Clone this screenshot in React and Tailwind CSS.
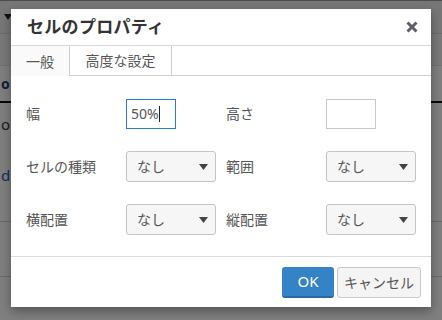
import React from 'react'

const font = { fontFamily: '"Noto Sans", "Noto Sans CJK JP", sans-serif' }

const Select = () => (
  <div className="flex items-center justify-between w-[90px] h-[31px] pl-[10px] pr-[7px] bg-[#f5f6f5] border border-[#c4c4c4] rounded-[3px] text-[14px] text-[#555]">
    <span>なし</span>
    <svg width="9" height="6" viewBox="0 0 9 6">
      <path d="M0 0 L9 0 L4.5 6 Z" fill="#444" />
    </svg>
  </div>
)

const Label = ({ children }) => (
  <div className="flex items-center text-[14px] text-[#555]">{children}</div>
)

const Backdrop = () => (
  <div className="absolute inset-0 flex flex-col bg-white">
    <div className="h-[33px] border-t border-[#999] bg-[#eeeeee] flex items-center pl-[4px]">
      <svg width="8" height="6" viewBox="0 0 8 6">
        <path d="M0 0 L8 0 L4 6 Z" fill="#222" />
      </svg>
    </div>
    <div className="h-[32px] border-t border-[#d8d8d8] bg-[#f2f2f2]" />
    <div className="h-[36px] border-t border-[#e4e4e4] flex items-center">
      <span className="ml-[1px] text-[14px] leading-none font-bold text-[#1c3f6e]">o</span>
    </div>
    <div className="h-[120px] border-t-2 border-[#111] flex flex-col">
      <span className="mt-[14px] ml-[1px] text-[15px] leading-none text-[#333]">o</span>
      <span className="mt-[36px] ml-[1px] text-[15px] leading-none text-[#1a5fa6]">di</span>
    </div>
    <div className="h-[55px] border-t border-[#d4d4d4]" />
    <div className="flex-1 border-t border-[#d4d4d4]" />
  </div>
)

export default function App() {
  return (
    <div className="relative w-[442px] h-[320px] overflow-hidden" style={font}>
      <Backdrop />
      <div className="absolute inset-0 bg-black/50" />

      {/* Dialog */}
      <div className="absolute left-[11px] top-[9px] w-[420px] h-[298px] bg-white flex flex-col shadow-[0_4px_10px_rgba(0,0,0,0.35)]">
        <div className="h-[37px] border-b border-[#d6d6d6] flex items-center justify-between pl-[16px] pr-[13px]">
          <h1 className="text-[17px] font-bold text-[#333] tracking-[0.3px]">セルのプロパティ</h1>
          <svg width="12" height="12" viewBox="0 0 12 12">
            <path d="M1.5 1.5 L10.5 10.5 M10.5 1.5 L1.5 10.5" stroke="#5c6066" strokeWidth="3" />
          </svg>
        </div>

        <div className="flex h-[30px]">
          <div className="w-[59px] bg-[#fafafa] border-r border-[#cfcfcf] flex items-center justify-center text-[14px] text-[#555]">
            一般
          </div>
          <div className="w-[102px] border-r border-b border-[#cfcfcf] flex items-center justify-center text-[14px] text-[#555]">
            高度な設定
          </div>
          <div className="flex-1 border-b border-[#cfcfcf]" />
        </div>

        <div className="flex-1 pl-[15px] pt-[22px] grid grid-cols-[100px_100px_100px_100px] auto-rows-[31px] gap-y-[22px]">
          <Label>幅</Label>
          <div className="flex items-center">
            <div className="w-[50px] h-[30px] border border-[#2b7ad3] flex items-center pl-[4px] text-[14px] text-[#555]">
              50%<span className="w-px h-[16px] bg-[#222]" />
            </div>
          </div>
          <Label>高さ</Label>
          <div className="flex items-center">
            <div className="w-[50px] h-[30px] border border-[#c8c8c8]" />
          </div>

          <Label>セルの種類</Label>
          <Select />
          <Label>範囲</Label>
          <Select />

          <Label>横配置</Label>
          <Select />
          <Label>縦配置</Label>
          <Select />
        </div>

        <div className="h-[51px] border-t border-[#dcdcdc] flex items-center justify-end gap-[3px] pr-[10px]">
          <button className="w-[52px] h-[31px] rounded-[3px] bg-[#3483c7] border-b-2 border-[#2a6aa6] text-white text-[15px]">
            OK
          </button>
          <button className="w-[84px] h-[31px] rounded-[3px] bg-[#f4f4f4] border border-[#c9c9c9] text-[#555] text-[14px]">
            キャンセル
          </button>
        </div>
      </div>
    </div>
  )
}
